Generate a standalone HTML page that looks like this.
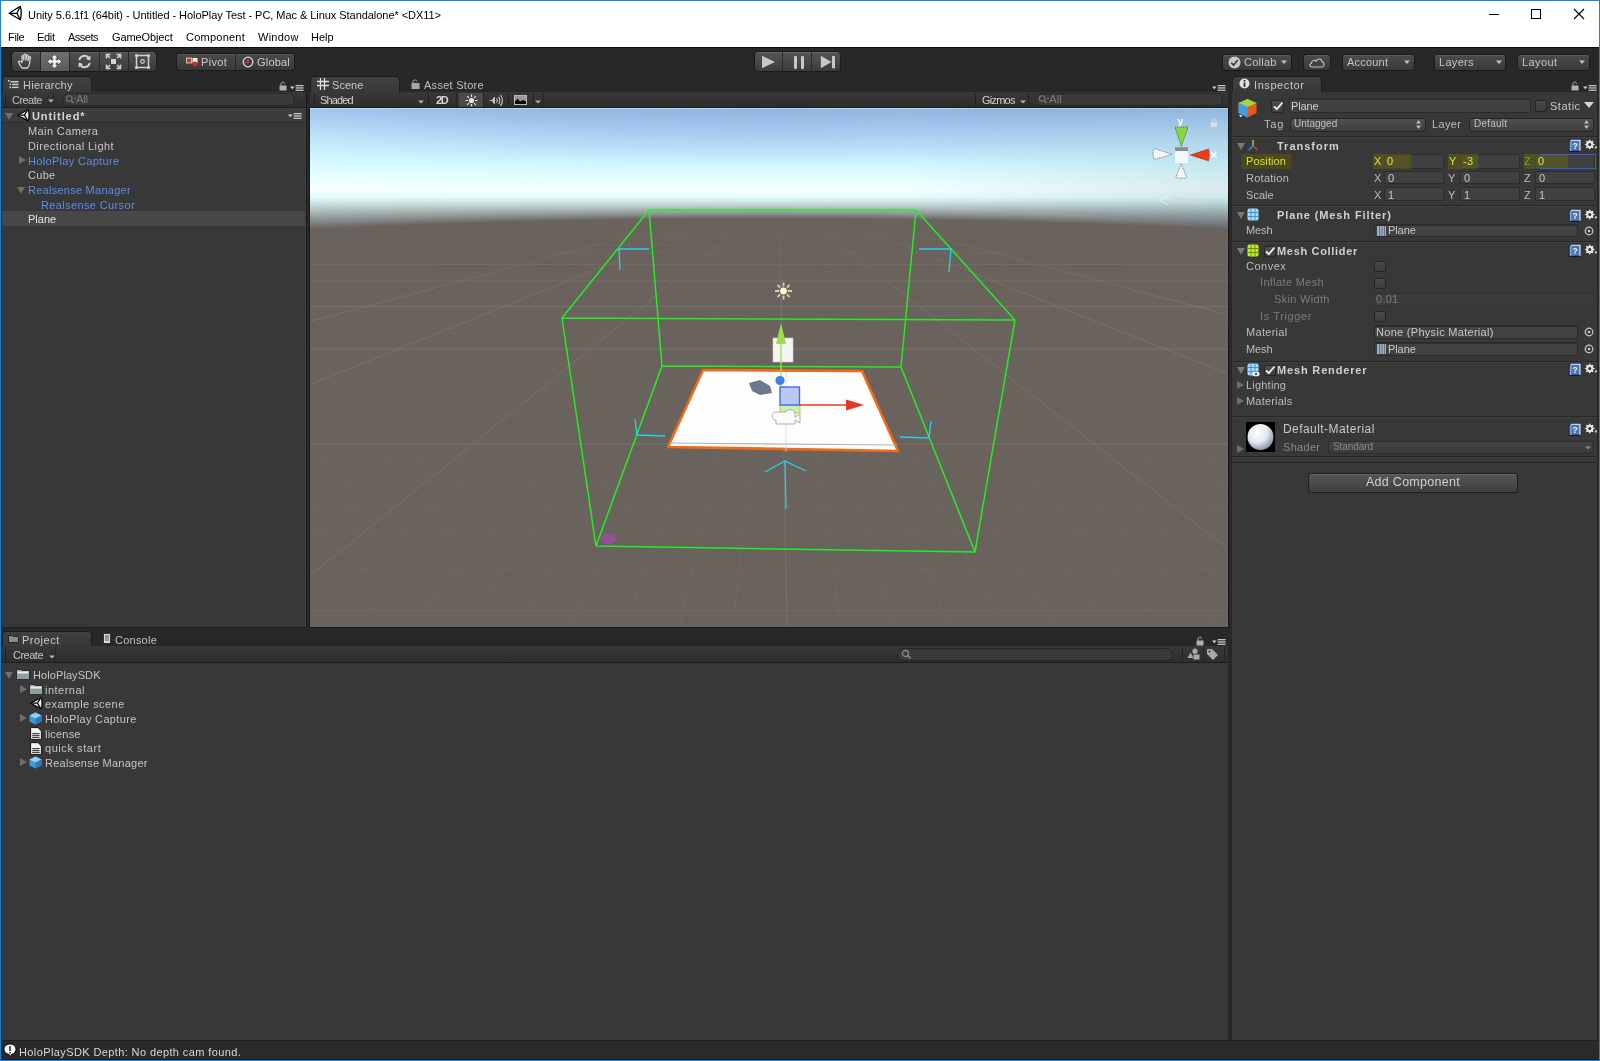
<!DOCTYPE html><html><head><meta charset="utf-8"><style>
*{margin:0;padding:0;box-sizing:border-box}
html,body{width:1600px;height:1061px;overflow:hidden;background:#282828}
body{position:relative;font-family:"Liberation Sans",sans-serif}
div,span,svg{position:absolute}
.t{will-change:transform;font-size:11px;line-height:0;white-space:nowrap;color:#c2c2c2;letter-spacing:.35px}
.tb{font-size:11px;line-height:0;white-space:nowrap;color:#c4c4c4;font-weight:bold;letter-spacing:.3px}
.w{font-size:11.5px;line-height:0;white-space:nowrap;color:#000;letter-spacing:0}
.btn{border:1px solid #1a1a1a;border-radius:3px;background:linear-gradient(#575757,#3d3d3d);box-shadow:inset 0 1px 0 rgba(255,255,255,.12)}
.tab{background:linear-gradient(#404040,#383838);border:1px solid #1f1f1f;border-bottom:none;border-radius:3px 3px 0 0}
.ptb{background:linear-gradient(#353535,#2c2c2c);border-bottom:1px solid #1c1c1c}
.fld{background:#2a2a2a;border:1px solid #222;border-radius:2px;box-shadow:inset 0 1px 0 rgba(0,0,0,.3)}
.ifld{background:#414141;border:1px solid #2b2b2b;border-radius:2px}
.cb{background:linear-gradient(#4a4a4a,#3c3c3c);border:1px solid #262626;border-radius:2px}
.sep{height:1px;background:#232323}
</style></head><body>
<div style="left:0px;top:0px;width:1600px;height:1061px;background:#1883d7"></div>
<div style="left:1px;top:1px;width:1598px;height:46px;background:#fff"></div>
<div style="left:1px;top:47px;width:1598px;height:1px;background:#0e0e0e"></div>
<div style="left:1px;top:48px;width:1598px;height:1012px;background:#282828"></div>
<div style="left:1px;top:1059px;width:1598px;height:1px;background:#1a1a1a"></div>
<svg style="left:8px;top:5px" width="16" height="16" viewBox="0 0 16 16"><path d="M1.2 8.3 L12.2 1.3 Q14.2 8.2 12.3 14.8 Z" fill="none" stroke="#000" stroke-width="1.3" stroke-linejoin="round"/><path d="M3 8.35 H9 L11.6 2.6 M9 8.35 L11.6 13.6" fill="none" stroke="#000" stroke-width="1.2"/></svg>
<span class="t" style="left:28.0px;top:14.79px;font-size:11px;color:#000;letter-spacing:-0.05px;">Unity 5.6.1f1 (64bit) - Untitled - HoloPlay Test - PC, Mac &amp; Linux Standalone* &lt;DX11&gt;</span>
<div style="left:1489px;top:14px;width:10px;height:1px;background:#000"></div>
<div style="left:1531px;top:9px;width:10px;height:10px;border:1px solid #000"></div>
<svg style="left:1573px;top:8px" width="12" height="12" viewBox="0 0 12 12"><path d="M1 1L11 11M11 1L1 11" stroke="#000" stroke-width="1.1"/></svg>
<span class="t" style="left:7.5px;top:37.49px;font-size:11px;color:#000;letter-spacing:-0.333px;">File</span>
<span class="t" style="left:37.0px;top:37.49px;font-size:11px;color:#000;letter-spacing:-0.317px;">Edit</span>
<span class="t" style="left:68.25px;top:37.49px;font-size:11px;color:#000;letter-spacing:-0.5px;">Assets</span>
<span class="t" style="left:111.75px;top:37.49px;font-size:11px;color:#000;letter-spacing:-0.111px;">GameObject</span>
<span class="t" style="left:185.5px;top:37.49px;font-size:11px;color:#000;letter-spacing:0.237px;">Component</span>
<span class="t" style="left:257.5px;top:37.49px;font-size:11px;color:#000;letter-spacing:0.26px;">Window</span>
<span class="t" style="left:310.75px;top:37.49px;font-size:11px;color:#000;letter-spacing:-0.033px;">Help</span>
<div style="left:11px;top:51px;width:146px;height:21px;border:1px solid #1b1b1b;border-radius:4px;background:linear-gradient(#515151,#3b3b3b);box-shadow:inset 0 1px 0 rgba(255,255,255,.1)"></div>
<div style="left:40px;top:52px;width:29px;height:19px;background:linear-gradient(#6e6e6e,#5c5c5c)"></div>
<div style="left:40px;top:52px;width:1px;height:19px;background:#2a2a2a"></div>
<div style="left:69px;top:52px;width:1px;height:19px;background:#2a2a2a"></div>
<div style="left:99px;top:52px;width:1px;height:19px;background:#2a2a2a"></div>
<div style="left:128px;top:52px;width:1px;height:19px;background:#2a2a2a"></div>
<svg style="left:16px;top:53px" width="20" height="17" viewBox="0 0 20 17"><path d="M6 15 C4 12 2.5 10 2.5 8.5 C3.5 7.5 4.5 8 6 9.5 L6 3.5 C6 2.3 7.6 2.3 7.6 3.5 L7.8 7 L8 2 C8 .8 9.8 .8 9.8 2 L10 7 L10.4 2.6 C10.5 1.5 12.2 1.6 12.1 2.8 L12 7.5 L12.8 4.4 C13.1 3.3 14.6 3.6 14.4 4.8 L13.6 10 C13.2 12.5 12.5 14 11.5 15 Z" fill="none" stroke="#d2d2d2" stroke-width="1.3" stroke-linejoin="round"/></svg>
<svg style="left:47px;top:54px" width="15" height="15" viewBox="0 0 15 15"><path d="M7.5 .6L11 4.2H3.9Z M7.5 14.4L11 10.8H3.9Z M.6 7.5L4.2 4V11Z M14.4 7.5L10.8 4V11Z" fill="#fff" stroke="#1a1a1a" stroke-width=".5"/><path d="M7.5 3.5V11.5M3.5 7.5H11.5" stroke="#fff" stroke-width="2.2"/></svg>
<svg style="left:76px;top:53px" width="17" height="17" viewBox="0 0 17 17"><path d="M3.2 7 A5.5 5.5 0 0 1 13 5.2" fill="none" stroke="#d2d2d2" stroke-width="2"/><path d="M14.6 2.5 L14.2 7.4 L9.8 6 Z" fill="#d2d2d2"/><path d="M13.8 10 A5.5 5.5 0 0 1 4 11.8" fill="none" stroke="#d2d2d2" stroke-width="2"/><path d="M2.4 14.5 L2.8 9.6 L7.2 11 Z" fill="#d2d2d2"/></svg>
<svg style="left:105px;top:53px" width="17" height="17" viewBox="0 0 17 17"><rect x="6" y="6" width="5" height="5" fill="#d2d2d2"/><path d="M1.5 5.5V1.5H5.5M1.5 1.5L5 5M15.5 5.5V1.5H11.5M15.5 1.5L12 5M1.5 11.5V15.5H5.5M1.5 15.5L5 12M15.5 11.5V15.5H11.5M15.5 15.5L12 12" fill="none" stroke="#d2d2d2" stroke-width="1.5"/></svg>
<svg style="left:134px;top:53px" width="17" height="17" viewBox="0 0 17 17"><rect x="2.5" y="2.5" width="12" height="12" fill="none" stroke="#d2d2d2" stroke-width="1.5"/><circle cx="2.5" cy="2.5" r="1.6" fill="#d2d2d2"/><circle cx="14.5" cy="2.5" r="1.6" fill="#d2d2d2"/><circle cx="2.5" cy="14.5" r="1.6" fill="#d2d2d2"/><circle cx="14.5" cy="14.5" r="1.6" fill="#d2d2d2"/><circle cx="8.5" cy="8.5" r="1.8" fill="none" stroke="#d2d2d2" stroke-width="1.2"/></svg>
<div style="left:176px;top:53px;width:119px;height:18px;border:1px solid #1b1b1b;border-radius:3px;background:linear-gradient(#4a4a4a,#383838);box-shadow:inset 0 1px 0 rgba(255,255,255,.08)"></div>
<div style="left:235px;top:54px;width:1px;height:16px;background:#262626"></div>
<svg style="left:186px;top:56px" width="13" height="12" viewBox="0 0 13 12"><rect x="0.5" y="2" width="5" height="5" fill="#c33" stroke="#ddd" stroke-width=".8"/><rect x="6.5" y="2" width="5" height="5" fill="#eee"/><circle cx="9" cy="8" r="2.5" fill="#d22"/></svg>
<span class="t" style="left:201.25px;top:61.79px;font-size:11px;color:#c9c9c9;letter-spacing:0.325px;">Pivot</span>
<svg style="left:242px;top:56px" width="12" height="12" viewBox="0 0 12 12"><circle cx="6" cy="6" r="4.8" fill="none" stroke="#d8d8d8" stroke-width="1.3"/><path d="M3 6.5 L6 6.5 L6 3" stroke="#d33" stroke-width="1.6" fill="none"/></svg>
<span class="t" style="left:256.75px;top:61.79px;font-size:11px;color:#c9c9c9;letter-spacing:0.19px;">Global</span>
<div style="left:754px;top:51px;width:87px;height:21px;border:1px solid #1b1b1b;border-radius:4px;background:linear-gradient(#555,#3c3c3c);box-shadow:inset 0 1px 0 rgba(255,255,255,.1)"></div>
<div style="left:782px;top:52px;width:1px;height:19px;background:#2c2c2c"></div>
<div style="left:811px;top:52px;width:1px;height:19px;background:#2c2c2c"></div>
<svg style="left:761px;top:55px" width="16" height="14" viewBox="0 0 16 14"><path d="M1 .8 L14 7 L1 13.3 Z" fill="#c8c8c8"/></svg>
<div style="left:794px;top:56px;width:3px;height:13px;background:#c8c8c8;border-radius:1px"></div>
<div style="left:801px;top:56px;width:3px;height:13px;background:#c8c8c8;border-radius:1px"></div>
<svg style="left:820px;top:55px" width="16" height="14" viewBox="0 0 16 14"><path d="M.8 .8 L11.5 7 L.8 13.3 Z" fill="#c8c8c8"/><rect x="12" y="1" width="3" height="12.3" fill="#c8c8c8"/></svg>
<div style="left:1222px;top:54px;width:70px;height:17px;border:1px solid #1b1b1b;border-radius:3px;background:linear-gradient(#4c4c4c,#393939);box-shadow:inset 0 1px 0 rgba(255,255,255,.08)"></div>
<span class="t" style="left:1243.75px;top:61.79px;font-size:11px;color:#c4c4c4;letter-spacing:0.26px;">Collab</span>
<svg style="left:1281px;top:60px" width="7" height="5" viewBox="0 0 7 5"><path d="M0 0.5H6L3 4Z" fill="#c0c0c0"/></svg>
<svg style="left:1228px;top:56px" width="13" height="13" viewBox="0 0 13 13"><circle cx="6.5" cy="6.5" r="6" fill="#c9c9c9"/><path d="M3.3 6.8 L5.6 9 L9.8 4" stroke="#3a3a3a" stroke-width="1.6" fill="none"/></svg>
<div style="left:1303px;top:54px;width:28px;height:17px;border:1px solid #1b1b1b;border-radius:3px;background:linear-gradient(#4c4c4c,#393939);box-shadow:inset 0 1px 0 rgba(255,255,255,.08)"></div>
<svg style="left:1308px;top:57px" width="18" height="11" viewBox="0 0 18 11"><path d="M4 10 C1.5 10 1 7 3.4 6.3 C3.4 3.2 7 2.5 8 4.2 C9 1 14 1.2 14 5 C16.5 5.2 16.8 10 14 10 Z" fill="none" stroke="#c4c4c4" stroke-width="1.1"/></svg>
<div style="left:1342px;top:54px;width:73px;height:17px;border:1px solid #1b1b1b;border-radius:3px;background:linear-gradient(#4c4c4c,#393939);box-shadow:inset 0 1px 0 rgba(255,255,255,.08)"></div>
<span class="t" style="left:1347.0px;top:61.79px;font-size:11px;color:#c4c4c4;letter-spacing:0.208px;">Account</span>
<svg style="left:1404px;top:60px" width="7" height="5" viewBox="0 0 7 5"><path d="M0 0.5H6L3 4Z" fill="#c0c0c0"/></svg>
<div style="left:1434px;top:54px;width:72px;height:17px;border:1px solid #1b1b1b;border-radius:3px;background:linear-gradient(#4c4c4c,#393939);box-shadow:inset 0 1px 0 rgba(255,255,255,.08)"></div>
<span class="t" style="left:1438.75px;top:61.79px;font-size:11px;color:#c4c4c4;letter-spacing:0.3px;">Layers</span>
<svg style="left:1496px;top:60px" width="7" height="5" viewBox="0 0 7 5"><path d="M0 0.5H6L3 4Z" fill="#c0c0c0"/></svg>
<div style="left:1517px;top:54px;width:73px;height:17px;border:1px solid #1b1b1b;border-radius:3px;background:linear-gradient(#4c4c4c,#393939);box-shadow:inset 0 1px 0 rgba(255,255,255,.08)"></div>
<span class="t" style="left:1521.75px;top:61.79px;font-size:11px;color:#c4c4c4;letter-spacing:0.39px;">Layout</span>
<svg style="left:1579px;top:60px" width="7" height="5" viewBox="0 0 7 5"><path d="M0 0.5H6L3 4Z" fill="#c0c0c0"/></svg>
<div style="left:2px;top:76px;width:90px;height:16px;background:linear-gradient(#404040,#393939);border:1px solid #1e1e1e;border-bottom:none;border-radius:4px 4px 0 0"></div>
<svg style="left:8px;top:80px" width="11" height="9" viewBox="0 0 11 9"><rect x="0" y="0" width="1.6" height="1.6" fill="#ccc"/><rect x="2.5" y="1" width="8" height="1.5" fill="#ccc"/><rect x="1.5" y="3.5" width="1.6" height="1.6" fill="#ccc"/><rect x="4" y="3.7" width="6.5" height="1.5" fill="#ccc"/><rect x="1.5" y="6.5" width="1.6" height="1.6" fill="#ccc"/><rect x="4" y="6.6" width="6.5" height="1.5" fill="#ccc"/></svg>
<span class="t" style="left:22.5px;top:85.39px;font-size:11px;color:#c8c8c8;letter-spacing:0.306px;">Hierarchy</span>
<svg style="left:279px;top:81px" width="8" height="10" viewBox="0 0 8 10"><path d="M2 4.5 V2.8 C2 .6 5.6 .6 5.6 2.8" fill="none" stroke="#b8b8b8" stroke-width="1"/><rect x=".5" y="4.5" width="7" height="5" fill="#b0b0b0"/></svg>
<svg style="left:290px;top:84px" width="14" height="8" viewBox="0 0 14 8"><path d="M0 2.6H4.6L2.3 5.2Z" fill="#cfcfcf"/><rect x="5.6" y="1" width="8" height="1.3" fill="#c4c4c4"/><rect x="5.6" y="3.3" width="8" height="1.3" fill="#c4c4c4"/><rect x="5.6" y="5.6" width="8" height="1.3" fill="#c4c4c4"/></svg>
<div style="left:2px;top:92px;width:304px;height:16px;background:linear-gradient(#383838,#2e2e2e);border-bottom:1px solid #1d1d1d"></div>
<div style="left:5px;top:93px;width:1px;height:14px;background:#232323"></div>
<div style="left:53px;top:93px;width:1px;height:14px;background:#262626"></div>
<span class="t" style="left:11.5px;top:99.59px;font-size:11px;color:#c4c4c4;letter-spacing:-0.55px;">Create</span>
<svg style="left:48px;top:99px" width="6" height="4" viewBox="0 0 6 4"><path d="M0 0.5H6L3 3.5Z" fill="#b0b0b0"/></svg>
<div style="left:62px;top:93px;width:233px;height:13px;border-radius:7px;background:#3a3a3a;border:1px solid #262626"></div>
<svg style="left:65px;top:94px" width="13" height="11" viewBox="0 0 13 11"><circle cx="4.2" cy="4.5" r="2.8" fill="none" stroke="#777" stroke-width="1.1"/><path d="M6.3 6.7L8.6 9" stroke="#777" stroke-width="1.3"/><path d="M8.5 3.8H11.5L10 5.4Z" fill="#777"/></svg>
<span class="t" style="left:76.0px;top:99.32px;font-size:11.5px;color:#7c7c7c;letter-spacing:-0.4px;">All</span>
<div style="left:2px;top:108px;width:304px;height:519px;background:#383838"></div>
<div style="left:2px;top:108px;width:304px;height:15px;background:linear-gradient(#3e3e3e,#3a3a3a);border-bottom:1px solid #2b2b2b"></div>
<svg style="left:5px;top:112px" width="8" height="8" viewBox="0 0 8 8"><path d="M0 1H8L4 8Z" fill="#6f6f6f"/></svg>
<svg style="left:16.5px;top:109px" width="13" height="13" viewBox="0 0 13 13"><path d="M0.7,6.2 L11.2,0.5 Q12.9,6.2 11.2,11.9 Z" fill="#f4f4f4" stroke="#050505" stroke-width="1.2" stroke-linejoin="round"/><path d="M2.4,6.2 H7.5 L10.3,1.4 M7.5,6.2 L10.3,11" fill="none" stroke="#050505" stroke-width="1.3"/></svg>
<span class="t" style="left:32.4px;top:116.49px;font-size:11px;color:#d4d4d4;font-weight:bold;letter-spacing:0.919px;">Untitled*</span>
<svg style="left:288px;top:112px" width="14" height="8" viewBox="0 0 14 8"><path d="M0 2.6H4.6L2.3 5.2Z" fill="#cfcfcf"/><rect x="5.6" y="1" width="8" height="1.3" fill="#c4c4c4"/><rect x="5.6" y="3.3" width="8" height="1.3" fill="#c4c4c4"/><rect x="5.6" y="5.6" width="8" height="1.3" fill="#c4c4c4"/></svg>
<div style="left:2px;top:211px;width:304px;height:15px;background:#474747"></div>
<span class="t" style="left:28.4px;top:131.19px;font-size:11px;color:#c6c6c6;letter-spacing:0.395px;">Main Camera</span>
<span class="t" style="left:28.4px;top:145.89px;font-size:11px;color:#c6c6c6;letter-spacing:0.419px;">Directional Light</span>
<span class="t" style="left:28.4px;top:160.59px;font-size:11px;color:#5a8ee8;letter-spacing:0.32px;">HoloPlay Capture</span>
<span class="t" style="left:28.4px;top:175.29px;font-size:11px;color:#c6c6c6;letter-spacing:0.3px;">Cube</span>
<span class="t" style="left:28.4px;top:189.99px;font-size:11px;color:#5a8ee8;letter-spacing:0.259px;">Realsense Manager</span>
<span class="t" style="left:41.4px;top:204.69px;font-size:11px;color:#5a8ee8;letter-spacing:0.37px;">Realsense Cursor</span>
<span class="t" style="left:28.4px;top:219.39px;font-size:11px;color:#e6e6e6;letter-spacing:0.013px;">Plane</span>
<svg style="left:17.5px;top:156px" width="8" height="8" viewBox="0 0 8 8"><path d="M1 0V8L8 4Z" fill="#6e6e6e"/></svg>
<svg style="left:17px;top:186px" width="8" height="8" viewBox="0 0 8 8"><path d="M0 1H8L4 8Z" fill="#6e6e6e"/></svg>
<div style="left:310px;top:76px;width:90px;height:16px;background:linear-gradient(#404040,#393939);border:1px solid #1e1e1e;border-bottom:none;border-radius:4px 4px 0 0"></div>
<svg style="left:317px;top:78px" width="12" height="12" viewBox="0 0 12 12"><path d="M3.5 0V12M7.5 0V12M0 3.5H12M0 7.5H12" stroke="#ddd" stroke-width="1.3"/></svg>
<span class="t" style="left:331.6px;top:85.39px;font-size:11px;color:#c8c8c8;letter-spacing:0.05px;">Scene</span>
<svg style="left:411px;top:79px" width="9" height="10" viewBox="0 0 9 10"><path d="M2 4V2.5C2 .5 6 .5 6 2.5" fill="none" stroke="#aaa" stroke-width="1"/><rect x=".5" y="4" width="8" height="6" fill="#a8a8a8"/></svg>
<span class="t" style="left:424.0px;top:85.39px;font-size:11px;color:#c0c0c0;letter-spacing:0.275px;">Asset Store</span>
<svg style="left:1212px;top:84px" width="14" height="8" viewBox="0 0 14 8"><path d="M0 2.6H4.6L2.3 5.2Z" fill="#cfcfcf"/><rect x="5.6" y="1" width="8" height="1.3" fill="#c4c4c4"/><rect x="5.6" y="3.3" width="8" height="1.3" fill="#c4c4c4"/><rect x="5.6" y="5.6" width="8" height="1.3" fill="#c4c4c4"/></svg>
<div style="left:310px;top:92px;width:918px;height:16px;background:linear-gradient(#383838,#2d2d2d);border-bottom:1px solid #1a1a1a"></div>
<div style="left:314px;top:93px;width:1px;height:14px;background:#232323"></div>
<div style="left:428px;top:93px;width:1px;height:14px;background:#232323"></div>
<div style="left:456px;top:93px;width:1px;height:14px;background:#232323"></div>
<div style="left:483px;top:93px;width:1px;height:14px;background:#232323"></div>
<div style="left:508px;top:93px;width:1px;height:14px;background:#232323"></div>
<div style="left:533px;top:93px;width:1px;height:14px;background:#232323"></div>
<div style="left:543px;top:93px;width:1px;height:14px;background:#232323"></div>
<div style="left:975px;top:93px;width:1px;height:14px;background:#232323"></div>
<div style="left:1028px;top:93px;width:1px;height:14px;background:#232323"></div>
<span class="t" style="left:320.4px;top:99.59px;font-size:11px;color:#d0d0d0;letter-spacing:-0.87px;">Shaded</span>
<svg style="left:418px;top:100px" width="6" height="4" viewBox="0 0 6 4"><path d="M0 0.5H6L3 3.5Z" fill="#b0b0b0"/></svg>
<span class="t" style="left:435.6px;top:99.59px;font-size:11px;color:#d8d8d8;font-weight:bold;letter-spacing:-1.25px;">2D</span>
<div style="left:459px;top:93px;width:24px;height:14px;background:#4a4a4a"></div>
<svg style="left:465px;top:94px" width="13" height="13" viewBox="0 0 13 13"><circle cx="6.5" cy="6.5" r="2.6" fill="#e6e6e6"/><path d="M6.5 0.5V3M6.5 10V12.5M0.5 6.5H3M10 6.5H12.5M2.2 2.2L3.9 3.9M9.1 9.1L10.8 10.8M10.8 2.2L9.1 3.9M2.2 10.8L3.9 9.1" stroke="#e6e6e6" stroke-width="1.2"/></svg>
<svg style="left:489px;top:94px" width="14" height="13" viewBox="0 0 14 13"><path d="M0.5 6.5H3L5.5 3V10L3 6.5" fill="#ccc" stroke="#ccc" stroke-width=".8"/><path d="M7.5 4.5C8.5 5.5 8.5 7.5 7.5 8.5M9.5 2.8C11.2 4.6 11.2 8.4 9.5 10.2M11.5 1.2C14 3.8 14 9.2 11.5 11.8" fill="none" stroke="#ccc" stroke-width="1.1"/></svg>
<svg style="left:514px;top:95px" width="13" height="10" viewBox="0 0 13 10"><rect x=".5" y=".5" width="12" height="9" fill="#9a9a9a" stroke="#b8b8b8" stroke-width="1"/><path d="M1 9V6.5L3.5 3.5L6 6.5L9 5L12 6.5V9Z" fill="#080808"/></svg>
<svg style="left:535px;top:100px" width="6" height="4" viewBox="0 0 6 4"><path d="M0 0.5H6L3 3.5Z" fill="#b0b0b0"/></svg>
<span class="t" style="left:981.6px;top:99.59px;font-size:11px;color:#d0d0d0;letter-spacing:-0.78px;">Gizmos</span>
<svg style="left:1020px;top:100px" width="6" height="4" viewBox="0 0 6 4"><path d="M0 0.5H6L3 3.5Z" fill="#b0b0b0"/></svg>
<div style="left:1035px;top:93px;width:188px;height:13px;border-radius:7px;background:#3a3a3a;border:1px solid #262626"></div>
<svg style="left:1038px;top:94px" width="13" height="11" viewBox="0 0 13 11"><circle cx="4.2" cy="4.5" r="2.8" fill="none" stroke="#777" stroke-width="1.1"/><path d="M6.3 6.7L8.6 9" stroke="#777" stroke-width="1.3"/><path d="M8.5 3.8H11.5L10 5.4Z" fill="#777"/></svg>
<span class="t" style="left:1048.75px;top:99.32px;font-size:11.5px;color:#7c7c7c;letter-spacing:-0.025px;">All</span>
<svg style="left:310px;top:108px" width="918" height="519" viewBox="310 108 918 519">
<defs>
<linearGradient id="gfade" x1="0" y1="215" x2="0" y2="300" gradientUnits="userSpaceOnUse"><stop offset="0" stop-color="#fff" stop-opacity="0"/><stop offset="1" stop-color="#fff" stop-opacity="1"/></linearGradient>
<mask id="gm"><rect x="300" y="100" width="940" height="540" fill="url(#gfade)"/></mask>
<linearGradient id="gfade2" x1="0" y1="230" x2="0" y2="627" gradientUnits="userSpaceOnUse"><stop offset="0" stop-color="#fff" stop-opacity="0"/><stop offset="1" stop-color="#fff" stop-opacity="1"/></linearGradient>
<mask id="gm2"><rect x="300" y="100" width="940" height="540" fill="url(#gfade2)"/></mask>
</defs>
<g><path d="M300,68.00Q769,108.00 1238,68.00V640H300Z" fill="#8aacd8"/><path d="M300,69.00Q769,109.00 1238,69.00V640H300Z" fill="#8aacd8"/><path d="M300,70.00Q769,110.00 1238,70.00V640H300Z" fill="#8badd8"/><path d="M300,71.00Q769,111.00 1238,71.00V640H300Z" fill="#8badd9"/><path d="M300,72.00Q769,112.00 1238,72.00V640H300Z" fill="#8badd9"/><path d="M300,73.00Q769,113.00 1238,73.00V640H300Z" fill="#8caed9"/><path d="M300,74.00Q769,114.00 1238,74.00V640H300Z" fill="#8caed9"/><path d="M300,75.00Q769,115.00 1238,75.00V640H300Z" fill="#8caed9"/><path d="M300,76.00Q769,116.00 1238,76.00V640H300Z" fill="#8daeda"/><path d="M300,77.00Q769,117.00 1238,77.00V640H300Z" fill="#8dafda"/><path d="M300,78.00Q769,118.00 1238,78.00V640H300Z" fill="#8eafda"/><path d="M300,79.00Q769,119.00 1238,79.00V640H300Z" fill="#8eafda"/><path d="M300,80.00Q769,120.00 1238,80.00V640H300Z" fill="#8eb0da"/><path d="M300,81.00Q769,121.00 1238,81.00V640H300Z" fill="#8fb0db"/><path d="M300,82.00Q769,122.00 1238,82.00V640H300Z" fill="#8fb0db"/><path d="M300,83.00Q769,123.00 1238,83.00V640H300Z" fill="#8fb0db"/><path d="M300,84.00Q769,124.00 1238,84.00V640H300Z" fill="#90b1db"/><path d="M300,85.00Q769,125.00 1238,85.00V640H300Z" fill="#90b1db"/><path d="M300,86.00Q769,126.00 1238,86.00V640H300Z" fill="#90b1dc"/><path d="M300,87.00Q769,127.00 1238,87.00V640H300Z" fill="#91b2dc"/><path d="M300,88.00Q769,128.00 1238,88.00V640H300Z" fill="#91b2dc"/><path d="M300,89.00Q769,129.00 1238,89.00V640H300Z" fill="#92b3dd"/><path d="M300,90.00Q769,130.00 1238,90.00V640H300Z" fill="#93b4de"/><path d="M300,91.00Q769,131.00 1238,91.00V640H300Z" fill="#94b5df"/><path d="M300,92.00Q769,132.00 1238,92.00V640H300Z" fill="#94b6e0"/><path d="M300,93.00Q769,133.00 1238,93.00V640H300Z" fill="#95b7e0"/><path d="M300,94.00Q769,134.00 1238,94.00V640H300Z" fill="#96b8e1"/><path d="M300,95.00Q769,135.00 1238,95.00V640H300Z" fill="#97b9e2"/><path d="M300,96.00Q769,136.00 1238,96.00V640H300Z" fill="#98bae3"/><path d="M300,97.00Q769,137.00 1238,97.00V640H300Z" fill="#99bbe4"/><path d="M300,98.00Q769,138.00 1238,98.00V640H300Z" fill="#9abce5"/><path d="M300,99.00Q769,139.00 1238,99.00V640H300Z" fill="#9abde6"/><path d="M300,100.00Q769,140.00 1238,100.00V640H300Z" fill="#9bbee7"/><path d="M300,101.00Q769,141.00 1238,101.00V640H300Z" fill="#9cbfe8"/><path d="M300,102.00Q769,142.00 1238,102.00V640H300Z" fill="#9dc0e9"/><path d="M300,103.00Q769,143.00 1238,103.00V640H300Z" fill="#9ec1ea"/><path d="M300,104.00Q769,144.00 1238,104.00V640H300Z" fill="#9fc2ea"/><path d="M300,105.00Q769,145.00 1238,105.00V640H300Z" fill="#9fc3eb"/><path d="M300,106.00Q769,146.00 1238,106.00V640H300Z" fill="#a0c4ec"/><path d="M300,107.00Q769,147.00 1238,107.00V640H300Z" fill="#a1c5ed"/><path d="M300,108.00Q769,148.00 1238,108.00V640H300Z" fill="#a2c6ee"/><path d="M300,109.14Q769,148.86 1238,109.14V640H300Z" fill="#a3c7ee"/><path d="M300,110.27Q769,149.73 1238,110.27V640H300Z" fill="#a4c8ef"/><path d="M300,111.41Q769,150.59 1238,111.41V640H300Z" fill="#a6caef"/><path d="M300,112.55Q769,151.45 1238,112.55V640H300Z" fill="#a7cbf0"/><path d="M300,113.68Q769,152.32 1238,113.68V640H300Z" fill="#a8ccf0"/><path d="M300,114.82Q769,153.18 1238,114.82V640H300Z" fill="#a9cdf1"/><path d="M300,115.95Q769,154.05 1238,115.95V640H300Z" fill="#aacef1"/><path d="M300,117.09Q769,154.91 1238,117.09V640H300Z" fill="#abcff2"/><path d="M300,118.23Q769,155.77 1238,118.23V640H300Z" fill="#add1f2"/><path d="M300,119.36Q769,156.64 1238,119.36V640H300Z" fill="#aed2f3"/><path d="M300,120.50Q769,157.50 1238,120.50V640H300Z" fill="#afd3f3"/><path d="M300,121.64Q769,158.36 1238,121.64V640H300Z" fill="#b0d4f3"/><path d="M300,122.77Q769,159.23 1238,122.77V640H300Z" fill="#b1d5f4"/><path d="M300,123.91Q769,160.09 1238,123.91V640H300Z" fill="#b3d7f4"/><path d="M300,125.05Q769,160.95 1238,125.05V640H300Z" fill="#b4d8f5"/><path d="M300,126.18Q769,161.82 1238,126.18V640H300Z" fill="#b5d9f5"/><path d="M300,127.32Q769,162.68 1238,127.32V640H300Z" fill="#b6daf6"/><path d="M300,128.45Q769,163.55 1238,128.45V640H300Z" fill="#b7dbf6"/><path d="M300,129.59Q769,164.41 1238,129.59V640H300Z" fill="#b8dcf7"/><path d="M300,130.73Q769,165.27 1238,130.73V640H300Z" fill="#badef7"/><path d="M300,131.86Q769,166.14 1238,131.86V640H300Z" fill="#bbdff8"/><path d="M300,133.00Q769,167.00 1238,133.00V640H300Z" fill="#bce0f8"/><path d="M300,134.56Q769,167.44 1238,134.56V640H300Z" fill="#bde2f8"/><path d="M300,136.12Q769,167.88 1238,136.12V640H300Z" fill="#bfe3f9"/><path d="M300,137.69Q769,168.31 1238,137.69V640H300Z" fill="#c0e4f9"/><path d="M300,139.25Q769,168.75 1238,139.25V640H300Z" fill="#c2e6fa"/><path d="M300,140.81Q769,169.19 1238,140.81V640H300Z" fill="#c3e8fa"/><path d="M300,142.38Q769,169.62 1238,142.38V640H300Z" fill="#c4e9fb"/><path d="M300,143.94Q769,170.06 1238,143.94V640H300Z" fill="#c6eafb"/><path d="M300,145.50Q769,170.50 1238,145.50V640H300Z" fill="#c7ecfc"/><path d="M300,147.06Q769,170.94 1238,147.06V640H300Z" fill="#c8eefc"/><path d="M300,148.62Q769,171.38 1238,148.62V640H300Z" fill="#caeffc"/><path d="M300,150.19Q769,171.81 1238,150.19V640H300Z" fill="#cbf0fd"/><path d="M300,151.75Q769,172.25 1238,151.75V640H300Z" fill="#ccf2fd"/><path d="M300,153.31Q769,172.69 1238,153.31V640H300Z" fill="#cef4fe"/><path d="M300,154.88Q769,173.12 1238,154.88V640H300Z" fill="#cff5fe"/><path d="M300,156.44Q769,173.56 1238,156.44V640H300Z" fill="#d1f6ff"/><path d="M300,158.00Q769,174.00 1238,158.00V640H300Z" fill="#d2f8ff"/><path d="M300,159.17Q769,174.83 1238,159.17V640H300Z" fill="#d3f8ff"/><path d="M300,160.33Q769,175.67 1238,160.33V640H300Z" fill="#d5f9ff"/><path d="M300,161.50Q769,176.50 1238,161.50V640H300Z" fill="#d6faff"/><path d="M300,162.67Q769,177.33 1238,162.67V640H300Z" fill="#d7faff"/><path d="M300,163.83Q769,178.17 1238,163.83V640H300Z" fill="#d9faff"/><path d="M300,165.00Q769,179.00 1238,165.00V640H300Z" fill="#dafbff"/><path d="M300,166.17Q769,179.83 1238,166.17V640H300Z" fill="#dbfcff"/><path d="M300,167.33Q769,180.67 1238,167.33V640H300Z" fill="#ddfcff"/><path d="M300,168.50Q769,181.50 1238,168.50V640H300Z" fill="#defcff"/><path d="M300,169.67Q769,182.33 1238,169.67V640H300Z" fill="#dffdff"/><path d="M300,170.83Q769,183.17 1238,170.83V640H300Z" fill="#e1feff"/><path d="M300,172.00Q769,184.00 1238,172.00V640H300Z" fill="#e2feff"/><path d="M300,173.42Q769,184.58 1238,173.42V640H300Z" fill="#e4feff"/><path d="M300,174.83Q769,185.17 1238,174.83V640H300Z" fill="#e5feff"/><path d="M300,176.25Q769,185.75 1238,176.25V640H300Z" fill="#e7feff"/><path d="M300,177.67Q769,186.33 1238,177.67V640H300Z" fill="#e9feff"/><path d="M300,179.08Q769,186.92 1238,179.08V640H300Z" fill="#eafeff"/><path d="M300,180.50Q769,187.50 1238,180.50V640H300Z" fill="#ecfeff"/><path d="M300,181.92Q769,188.08 1238,181.92V640H300Z" fill="#eeffff"/><path d="M300,183.33Q769,188.67 1238,183.33V640H300Z" fill="#efffff"/><path d="M300,184.75Q769,189.25 1238,184.75V640H300Z" fill="#f1ffff"/><path d="M300,186.17Q769,189.83 1238,186.17V640H300Z" fill="#f3ffff"/><path d="M300,187.58Q769,190.42 1238,187.58V640H300Z" fill="#f4ffff"/><path d="M300,189.00Q769,191.00 1238,189.00V640H300Z" fill="#f6ffff"/><path d="M300,190.14Q769,191.86 1238,190.14V640H300Z" fill="#f3ffff"/><path d="M300,191.29Q769,192.71 1238,191.29V640H300Z" fill="#f0fefe"/><path d="M300,192.43Q769,193.57 1238,192.43V640H300Z" fill="#edfefe"/><path d="M300,193.57Q769,194.43 1238,193.57V640H300Z" fill="#ebfdfd"/><path d="M300,194.71Q769,195.29 1238,194.71V640H300Z" fill="#e8fdfd"/><path d="M300,195.86Q769,196.14 1238,195.86V640H300Z" fill="#e5fcfc"/><path d="M300,197.00Q769,197.00 1238,197.00V640H300Z" fill="#e2fcfc"/><path d="M300,198.17Q769,197.83 1238,198.17V640H300Z" fill="#def7f7"/><path d="M300,199.33Q769,198.67 1238,199.33V640H300Z" fill="#d9f1f1"/><path d="M300,200.50Q769,199.50 1238,200.50V640H300Z" fill="#d5ecec"/><path d="M300,201.67Q769,200.33 1238,201.67V640H300Z" fill="#d1e7e7"/><path d="M300,202.83Q769,201.17 1238,202.83V640H300Z" fill="#cce1e1"/><path d="M300,204.00Q769,202.00 1238,204.00V640H300Z" fill="#c8dcdc"/><path d="M300,205.40Q769,202.60 1238,205.40V640H300Z" fill="#c3d5d5"/><path d="M300,206.80Q769,203.20 1238,206.80V640H300Z" fill="#becece"/><path d="M300,208.20Q769,203.80 1238,208.20V640H300Z" fill="#b8c8c8"/><path d="M300,209.60Q769,204.40 1238,209.60V640H300Z" fill="#b3c1c1"/><path d="M300,211.00Q769,205.00 1238,211.00V640H300Z" fill="#aebaba"/><path d="M300,212.50Q769,205.50 1238,212.50V640H300Z" fill="#a8b2b2"/><path d="M300,214.00Q769,206.00 1238,214.00V640H300Z" fill="#a1abab"/><path d="M300,215.50Q769,206.50 1238,215.50V640H300Z" fill="#9aa4a4"/><path d="M300,217.00Q769,207.00 1238,217.00V640H300Z" fill="#949c9c"/><path d="M300,219.00Q769,207.00 1238,219.00V640H300Z" fill="#8d9393"/><path d="M300,221.00Q769,207.00 1238,221.00V640H300Z" fill="#858989"/><path d="M300,223.00Q769,207.00 1238,223.00V640H300Z" fill="#7e8080"/><path d="M300,225.00Q769,207.00 1238,225.00V640H300Z" fill="#777674"/><path d="M300,227.00Q769,207.00 1238,227.00V640H300Z" fill="#716c69"/><path d="M300,229Q769,207 1238,229V640H300Z" fill="#6a625d"/></g>
<rect x="310" y="108" width="918" height="1" fill="#bde8fb" opacity=".8"/>
<defs><linearGradient id="rside" x1="900" y1="0" x2="1228" y2="0" gradientUnits="userSpaceOnUse"><stop offset="0" stop-color="#306080" stop-opacity="0"/><stop offset="1" stop-color="#306080" stop-opacity=".13"/></linearGradient></defs>
<path d="M900,108 H1228 V228 Q1100,214 900,204 Z" fill="url(#rside)"/>
<g mask="url(#gm)">
<path d="M611.2,230.5L-1319,627 M615.5,230.5L-1265,627 M619.8,230.5L-1211,627 M624.1,230.5L-1157,627 M628.4,230.5L-1103,627 M632.8,230.5L-1049,627 M637.1,230.5L-995,627 M641.4,230.5L-941,627 M645.7,230.5L-887,627 M654.4,230.5L-779,627 M658.7,230.5L-725,627 M663.0,230.5L-671,627 M667.3,230.5L-617,627 M671.6,230.5L-563,627 M676.0,230.5L-509,627 M680.3,230.5L-455,627 M684.6,230.5L-401,627 M688.9,230.5L-347,627 M697.6,230.5L-239,627 M701.9,230.5L-185,627 M706.2,230.5L-131,627 M710.5,230.5L-77,627 M714.8,230.5L-23,627 M719.2,230.5L31,627 M723.5,230.5L85,627 M727.8,230.5L139,627 M732.1,230.5L193,627 M740.8,230.5L301,627 M745.1,230.5L355,627 M749.4,230.5L409,627 M753.7,230.5L463,627 M758.0,230.5L517,627 M762.4,230.5L571,627 M766.7,230.5L625,627 M771.0,230.5L679,627 M775.3,230.5L733,627 M784.0,230.5L841,627 M788.3,230.5L895,627 M792.6,230.5L949,627 M796.9,230.5L1003,627 M801.2,230.5L1057,627 M805.6,230.5L1111,627 M809.9,230.5L1165,627 M814.2,230.5L1219,627 M818.5,230.5L1273,627 M827.2,230.5L1381,627 M831.5,230.5L1435,627 M835.8,230.5L1489,627 M840.1,230.5L1543,627 M844.4,230.5L1597,627 M848.8,230.5L1651,627 M853.1,230.5L1705,627 M857.4,230.5L1759,627 M861.7,230.5L1813,627 M870.4,230.5L1921,627 M874.7,230.5L1975,627 M879.0,230.5L2029,627 M883.3,230.5L2083,627 M887.6,230.5L2137,627 M892.0,230.5L2191,627 M896.3,230.5L2245,627 M900.6,230.5L2299,627 M904.9,230.5L2353,627 M913.6,230.5L2461,627 M917.9,230.5L2515,627 M922.2,230.5L2569,627 M926.5,230.5L2623,627 M930.8,230.5L2677,627 M935.2,230.5L2731,627 M939.5,230.5L2785,627 M943.8,230.5L2839,627 M948.1,230.5L2893,627 M300,610.5L1240,610.5 M300,568.8L1240,568.8 M300,534.7L1240,534.7 M300,506.3L1240,506.3 M300,482.3L1240,482.3 M300,461.8L1240,461.8 M300,428.4L1240,428.4 M300,414.7L1240,414.7 M300,402.5L1240,402.5 M300,391.6L1240,391.6 M300,381.8L1240,381.8 M300,372.9L1240,372.9 M300,364.9L1240,364.9 M300,357.5L1240,357.5 M300,350.7L1240,350.7 M300,338.8L1240,338.8 M300,333.5L1240,333.5 M300,328.6L1240,328.6 M300,324.0L1240,324.0 M300,319.7L1240,319.7 M300,315.7L1240,315.7 M300,312.0L1240,312.0 M300,308.5L1240,308.5 M300,305.1L1240,305.1 M300,299.1L1240,299.1 M300,296.3L1240,296.3 M300,293.6L1240,293.6 M300,291.1L1240,291.1 M300,288.7L1240,288.7 M300,286.5L1240,286.5 M300,284.3L1240,284.3 M300,282.3L1240,282.3 M300,280.3L1240,280.3 M300,276.6L1240,276.6 M300,274.9L1240,274.9 M300,273.3L1240,273.3 M300,271.7L1240,271.7 M300,270.2L1240,270.2 M300,268.7L1240,268.7 M300,267.3L1240,267.3 M300,266.0L1240,266.0 M300,264.7L1240,264.7 M300,262.2L1240,262.2 M300,261.1L1240,261.1 M300,259.9L1240,259.9 M300,258.8L1240,258.8 M300,257.8L1240,257.8 M300,256.8L1240,256.8 M300,255.8L1240,255.8 M300,254.9L1240,254.9 M300,253.9L1240,253.9 M300,252.2L1240,252.2 M300,251.3L1240,251.3 M300,250.5L1240,250.5 M300,249.7L1240,249.7 M300,249.0L1240,249.0 M300,248.2L1240,248.2 M300,247.5L1240,247.5 M300,246.8L1240,246.8 M300,246.1L1240,246.1 M300,244.8L1240,244.8 M300,244.1L1240,244.1 M300,243.5L1240,243.5 M300,242.9L1240,242.9 M300,242.3L1240,242.3 M300,241.8L1240,241.8 M300,241.2L1240,241.2 M300,240.7L1240,240.7 M300,240.1L1240,240.1" stroke="#7e7874" stroke-width="1" fill="none" opacity=".35" mask="url(#gm2)"/>
<path d="M698.4,217.6L-833,627 M725.4,217.6L-293,627 M752.4,217.6L247,627 M779.4,217.6L787,627 M806.4,217.6L1327,627 M833.4,217.6L1867,627 M860.4,217.6L2407,627 M300,233.6L1240,233.6 M300,239L1240,239 M300,245L1240,245 M300,253L1240,253 M300,264.5L1240,264.5 M300,281L1240,281 M300,306.5L1240,306.5 M300,349L1240,349 M300,444L1240,444" stroke="#8a8480" stroke-width="1" fill="none" opacity=".45"/>
</g>

<path d="M649,210L916,210 M649,210L562,318 M916,210L1015,320 M562,318L1015,320 M649,210L662,366 M916,210L901,367 M562,318L596,546 M1015,320L975,552 M662,366L901,367 M662,366L596,546 M901,367L975,552 M596,546L975,552" stroke="#22ee22" stroke-width="1.5" fill="none"/>
<path d="M703,370 L862,371 L898,451 L668,447 Z" fill="#fdfdfd" stroke="#f26a16" stroke-width="2.6" stroke-linejoin="round"/>
<path d="M670,443 L897,445" stroke="#aeb4c0" stroke-width="1.2"/>
<path d="M786,372 L786,452" stroke="#cfd4dc" stroke-width="0.8"/>
<path d="M749,383 L760,380 L770,386 L772,393 L760,395 L752,391 Z" fill="#6a7890"/>
<path d="M617,249 H649 M619,249 L620,270" stroke="#22d2f0" stroke-width="1.3" fill="none"/>
<path d="M919,249 H952 M951,249 L949,272" stroke="#22d2f0" stroke-width="1.3" fill="none"/>
<path d="M635,419 L637,435 L665,436" stroke="#22d2f0" stroke-width="1.3" fill="none"/>
<path d="M931,421 L929,438 L900,437" stroke="#22d2f0" stroke-width="1.3" fill="none"/>
<path d="M786,509 L785,461 M765,472 L785,461 L806,471" stroke="#22d2f0" stroke-width="1.3" fill="none"/>
<rect x="773" y="338" width="20" height="24" fill="#f4f4f4" stroke="#d0d0d0" stroke-width=".6"/>
<path d="M781,405 V340" stroke="#9be04a" stroke-width="1.3"/>
<path d="M776,344 L781,323 L786,344 Z" fill="#9be04a"/>
<rect x="780" y="405" width="20" height="8" fill="#cfeeaa" stroke="#9ad85a" stroke-width="1"/>
<rect x="780" y="387" width="19.5" height="18" fill="#bcc6f2" stroke="#3d6ee8" stroke-width="1.4"/>
<circle cx="780" cy="380.5" r="4.6" fill="#3b82e6"/>
<path d="M800,405 H848" stroke="#e23a26" stroke-width="1.3"/>
<path d="M846,399.5 L864,405 L846,410.5 Z" fill="#e23a26"/>
<path d="M776,412 C771,412 771,420 776,420 L776,424 H795 V420 L800,423 V414 L795,417 V414 C795,409 788,408 786,412 Z" fill="#fafafa" stroke="#a8a8a8" stroke-width=".9"/>
<g transform="translate(783.5 291)"><path d="M0,-8.5V-4.5M0,4.5V8.5M-8.5,0H-4.5M4.5,0H8.5M-6,-6L-3.4,-3.4M3.4,3.4L6,6M6,-6L3.4,-3.4M-3.4,3.4L-6,6" stroke="#d8cfa8" stroke-width="1.8"/><circle r="4" fill="#fff3d6" stroke="#6e6650" stroke-width=".9"/></g>
<g transform="translate(608 538)"><path d="M-7,0 L0,-4 L7,0 L0,4 Z M-4,0 L0,-2 L4,0 L0,2 Z M-7,0 V2 L0,6 L7,2 V0" fill="none" stroke="#c23ccd" stroke-width="1"/></g>

<g>
<text x="1177.6" y="124.6" font-family="Liberation Sans" font-weight="bold" font-size="10" fill="#fff">y</text>
<path d="M1175,127 L1188,127 L1181.3,146.5 Z" fill="#86d83c" stroke="#3a4a2a" stroke-width=".7" stroke-dasharray="1.2 .8"/>
<rect x="1175" y="147.2" width="13" height="4" fill="#8a8c90"/>
<rect x="1175" y="151" width="13" height="12" fill="#f4f6fa"/>
<path d="M1208.5,149 C1209.5,152 1209.5,158 1208.5,161 L1190,155 Z" fill="#f03a14" stroke="#5a2a20" stroke-width=".6" stroke-dasharray="1.2 .8"/>
<path d="M1211.2,152.2 L1216.5,157.5 M1216.5,152.2 L1211.2,157.5" stroke="#fff" stroke-width="1.6"/>
<path d="M1154.5,148.6 C1152.5,151 1152.5,157 1154.5,159.5 L1172,154.3 Z" fill="#f6f6f6" stroke="#444" stroke-width=".6" stroke-dasharray="1.2 .8"/>
<path d="M1175.8,177.4 C1178,178.6 1184.5,178.6 1186.7,177.4 L1181.3,163.7 Z" fill="#f6f6f6" stroke="#444" stroke-width=".6" stroke-dasharray="1.2 .8"/>
<path d="M1212,122.5 V121.5 C1212,119 1216,119 1216,121.5" stroke="#dfe6ee" fill="none" stroke-width="1"/>
<rect x="1210.7" y="122.5" width="6.6" height="4.5" fill="#d6dee8"/>
<path d="M1168.3,196.2 L1159.5,200.5 L1168.3,204.7" stroke="#e2eef0" fill="none" stroke-width="1"/>
<text x="1171.2" y="204.3" font-family="Liberation Sans" font-size="10.5" fill="#ddd6d8" letter-spacing=".9">Persp</text>
</g>
</svg>
<div style="left:305px;top:108px;width:1px;height:519px;background:#3e3e3e"></div>
<div style="left:306px;top:92px;width:1px;height:536px;background:#1d1d1d"></div>
<div style="left:2px;top:627px;width:305px;height:1px;background:#1d1d1d"></div>
<div style="left:309px;top:108px;width:1px;height:520px;background:#1a1a1a"></div>
<div style="left:309px;top:627px;width:920px;height:1px;background:#1a1a1a"></div>
<div style="left:1228px;top:108px;width:1px;height:520px;background:#1a1a1a"></div>
<div style="left:2px;top:631px;width:90px;height:15px;background:linear-gradient(#404040,#393939);border:1px solid #1e1e1e;border-bottom:none;border-radius:4px 4px 0 0"></div>
<svg style="left:8px;top:634px" width="11" height="9" viewBox="0 0 11 9"><path d="M.5 1.5H4L5 2.5H10.5V8.5H.5Z" fill="#8a8a8a" stroke="#111" stroke-width=".8"/></svg>
<span class="t" style="left:22.0px;top:639.79px;font-size:11px;color:#c8c8c8;letter-spacing:0.5px;">Project</span>
<svg style="left:103px;top:633px" width="8" height="11" viewBox="0 0 8 11"><rect x=".5" y=".5" width="7" height="10" fill="#d8d8d8" stroke="#222" stroke-width=".8"/><path d="M2 3H6M2 5H6M2 7H6" stroke="#333" stroke-width=".8"/></svg>
<span class="t" style="left:114.5px;top:639.79px;font-size:11px;color:#c0c0c0;letter-spacing:0.233px;">Console</span>
<svg style="left:1196px;top:636px" width="8" height="10" viewBox="0 0 8 10"><path d="M2 4.5 V2.8 C2 .6 5.6 .6 5.6 2.8" fill="none" stroke="#b8b8b8" stroke-width="1"/><rect x=".5" y="4.5" width="7" height="5" fill="#b0b0b0"/></svg>
<svg style="left:1212px;top:638px" width="14" height="8" viewBox="0 0 14 8"><path d="M0 2.6H4.6L2.3 5.2Z" fill="#cfcfcf"/><rect x="5.6" y="1" width="8" height="1.3" fill="#c4c4c4"/><rect x="5.6" y="3.3" width="8" height="1.3" fill="#c4c4c4"/><rect x="5.6" y="5.6" width="8" height="1.3" fill="#c4c4c4"/></svg>
<div style="left:2px;top:646px;width:1226px;height:17px;background:linear-gradient(#383838,#2d2d2d);border-bottom:1px solid #1d1d1d"></div>
<div style="left:5px;top:647px;width:1px;height:15px;background:#232323"></div>
<div style="left:55px;top:647px;width:1px;height:15px;background:#262626"></div>
<span class="t" style="left:12.5px;top:654.99px;font-size:11px;color:#c4c4c4;letter-spacing:-0.5px;">Create</span>
<svg style="left:49px;top:655px" width="6" height="4" viewBox="0 0 6 4"><path d="M0 0.5H6L3 3.5Z" fill="#b0b0b0"/></svg>
<div style="left:897px;top:648px;width:276px;height:13px;border-radius:7px;background:#3a3a3a;border:1px solid #262626"></div>
<svg style="left:901px;top:649px" width="11" height="11" viewBox="0 0 11 11"><circle cx="4.5" cy="4.5" r="3" fill="none" stroke="#8a8a8a" stroke-width="1.3"/><path d="M6.8 6.8L9.5 9.5" stroke="#8a8a8a" stroke-width="1.6"/></svg>
<div style="left:1182px;top:647px;width:1px;height:15px;background:#232323"></div>
<div style="left:1203px;top:647px;width:1px;height:15px;background:#232323"></div>
<div style="left:1224px;top:647px;width:1px;height:15px;background:#232323"></div>
<svg style="left:1187px;top:648px" width="14" height="12" viewBox="0 0 14 12"><path d="M0.5 10L3.5 4.5L6.5 10Z" fill="#aaa"/><circle cx="8" cy="3.2" r="2.6" fill="#aaa"/><rect x="6.5" y="6.5" width="6" height="5" fill="#aaa"/></svg>
<svg style="left:1206px;top:648px" width="13" height="13" viewBox="0 0 13 13"><path d="M1 1H6L12 7L7 12L1 6Z" fill="#a8a8a8"/><circle cx="3.5" cy="3.5" r="1" fill="#333"/></svg>
<div style="left:2px;top:663px;width:1226px;height:377px;background:#383838"></div>
<svg style="left:5px;top:671px" width="8" height="8" viewBox="0 0 8 8"><path d="M0 1H8L4 8Z" fill="#6e6e6e"/></svg>
<svg style="left:16px;top:668px" width="14" height="12" viewBox="0 0 14 12"><path d="M.5 2.5V1.5H5L6 2.5H13.5V11.5H.5Z" fill="#9aa8ac" stroke="#1a1a1a" stroke-width=".8"/><rect x="1.5" y="3.5" width="11" height="2" fill="#e6ecee"/><rect x="1.5" y="6" width="11" height="5" fill="#8e9ea2"/></svg>
<span class="t" style="left:32.5px;top:674.99px;font-size:11px;color:#c6c6c6;letter-spacing:0.085px;">HoloPlaySDK</span>
<svg style="left:18.5px;top:685px" width="8" height="8" viewBox="0 0 8 8"><path d="M1 0V8L8 4Z" fill="#6e6e6e"/></svg>
<svg style="left:29px;top:683px" width="14" height="12" viewBox="0 0 14 12"><path d="M.5 2.5V1.5H5L6 2.5H13.5V11.5H.5Z" fill="#9aa8ac" stroke="#1a1a1a" stroke-width=".8"/><rect x="1.5" y="3.5" width="11" height="2" fill="#e6ecee"/><rect x="1.5" y="6" width="11" height="5" fill="#8e9ea2"/></svg>
<span class="t" style="left:45.0px;top:689.69px;font-size:11px;color:#c6c6c6;letter-spacing:0.486px;">internal</span>
<svg style="left:29.5px;top:697px" width="13" height="13" viewBox="0 0 13 13"><path d="M0.7,6.2 L11.2,0.5 Q12.9,6.2 11.2,11.9 Z" fill="#f4f4f4" stroke="#050505" stroke-width="1.2" stroke-linejoin="round"/><path d="M2.4,6.2 H7.5 L10.3,1.4 M7.5,6.2 L10.3,11" fill="none" stroke="#050505" stroke-width="1.3"/></svg>
<span class="t" style="left:45.0px;top:704.39px;font-size:11px;color:#c6c6c6;letter-spacing:0.438px;">example scene</span>
<svg style="left:18.5px;top:714px" width="8" height="8" viewBox="0 0 8 8"><path d="M1 0V8L8 4Z" fill="#6e6e6e"/></svg>
<svg style="left:29px;top:712px" width="13" height="13" viewBox="0 0 13 13"><path d="M6.5 .5L12.5 3.5V9.5L6.5 12.5L.5 9.5V3.5Z" fill="#3e9ad8"/><path d="M.5 3.5L6.5 6.5L12.5 3.5L6.5 .5Z" fill="#8fd2f6"/><path d="M6.5 6.5V12.5L12.5 9.5V3.5Z" fill="#2a7ab8"/></svg>
<span class="t" style="left:45.0px;top:719.09px;font-size:11px;color:#c6c6c6;letter-spacing:0.337px;">HoloPlay Capture</span>
<svg style="left:29.5px;top:727px" width="12" height="13" viewBox="0 0 12 13"><path d="M.6 .6H8L11.4 4V12.4H.6Z" fill="#f2f2f2" stroke="#111" stroke-width="1"/><path d="M2.2 6.6H9.6M2.2 8.6H9.6M2.2 10.5H9.6" stroke="#444" stroke-width="1.1"/></svg>
<span class="t" style="left:45.0px;top:733.79px;font-size:11px;color:#c6c6c6;letter-spacing:0.208px;">license</span>
<svg style="left:29.5px;top:742px" width="12" height="13" viewBox="0 0 12 13"><path d="M.6 .6H8L11.4 4V12.4H.6Z" fill="#f2f2f2" stroke="#111" stroke-width="1"/><path d="M2.2 6.6H9.6M2.2 8.6H9.6M2.2 10.5H9.6" stroke="#444" stroke-width="1.1"/></svg>
<span class="t" style="left:45.0px;top:748.49px;font-size:11px;color:#c6c6c6;letter-spacing:0.56px;">quick start</span>
<svg style="left:18.5px;top:758px" width="8" height="8" viewBox="0 0 8 8"><path d="M1 0V8L8 4Z" fill="#6e6e6e"/></svg>
<svg style="left:29px;top:756px" width="13" height="13" viewBox="0 0 13 13"><path d="M6.5 .5L12.5 3.5V9.5L6.5 12.5L.5 9.5V3.5Z" fill="#3e9ad8"/><path d="M.5 3.5L6.5 6.5L12.5 3.5L6.5 .5Z" fill="#8fd2f6"/><path d="M6.5 6.5V12.5L12.5 9.5V3.5Z" fill="#2a7ab8"/></svg>
<span class="t" style="left:45.0px;top:763.19px;font-size:11px;color:#c6c6c6;letter-spacing:0.253px;">Realsense Manager</span>
<div style="left:2px;top:1040px;width:1596px;height:1px;background:#1e1e1e"></div>
<div style="left:2px;top:1041px;width:1596px;height:18px;background:#2a2a2a"></div>
<svg style="left:3px;top:1043px" width="14" height="14" viewBox="0 0 14 14"><path d="M7 1C3.5 1 1 3.3 1 6.3C1 9 3 11 6 11.5L8 13.5L8.5 11.4C11.3 10.8 13 8.8 13 6.3C13 3.3 10.5 1 7 1Z" fill="#fafafa" stroke="#000" stroke-width="1"/><rect x="6.1" y="3" width="1.8" height="5" fill="#444"/><rect x="6.1" y="9" width="1.8" height="1.6" fill="#444"/></svg>
<span class="t" style="left:19.0px;top:1052.19px;font-size:11px;color:#d8d8d8;letter-spacing:0.391px;">HoloPlaySDK Depth: No depth cam found.</span>
<div style="left:1232px;top:76px;width:90px;height:16px;background:linear-gradient(#404040,#393939);border:1px solid #1e1e1e;border-bottom:none;border-radius:4px 4px 0 0"></div>
<svg style="left:1239px;top:78px" width="11" height="11" viewBox="0 0 11 11"><circle cx="5.5" cy="5.5" r="5" fill="#e0e0e0"/><rect x="4.6" y="4.4" width="1.8" height="4.6" fill="#333"/><rect x="4.6" y="2" width="1.8" height="1.6" fill="#333"/></svg>
<span class="t" style="left:1253.6px;top:85.39px;font-size:11px;color:#c8c8c8;letter-spacing:0.581px;">Inspector</span>
<svg style="left:1571px;top:81px" width="8" height="10" viewBox="0 0 8 10"><path d="M2 4.5 V2.8 C2 .6 5.6 .6 5.6 2.8" fill="none" stroke="#b8b8b8" stroke-width="1"/><rect x=".5" y="4.5" width="7" height="5" fill="#b0b0b0"/></svg>
<svg style="left:1583px;top:84px" width="14" height="8" viewBox="0 0 14 8"><path d="M0 2.6H4.6L2.3 5.2Z" fill="#cfcfcf"/><rect x="5.6" y="1" width="8" height="1.3" fill="#c4c4c4"/><rect x="5.6" y="3.3" width="8" height="1.3" fill="#c4c4c4"/><rect x="5.6" y="5.6" width="8" height="1.3" fill="#c4c4c4"/></svg>
<div style="left:1232px;top:92px;width:366px;height:948px;background:#383838"></div>
<div style="left:1597px;top:92px;width:1px;height:948px;background:#2a2a2a"></div>
<svg style="left:1237px;top:98px" width="21" height="21" viewBox="0 0 21 21"><path d="M10.5 1L19.5 5V15L10.5 19.5L1.5 15V5Z" fill="#e85a1a"/><path d="M1.5 5L10.5 9L19.5 5L10.5 1Z" fill="#9ad84a"/><path d="M1.5 5L10.5 9V19.5L1.5 15Z" fill="#3aa0e8"/><path d="M2 17L5.5 17L3.75 19.5Z" fill="#ddd"/></svg>
<div style="left:1271px;top:100px;width:13px;height:13px;background:linear-gradient(#4e4e4e,#3e3e3e);border:1px solid #262626;border-radius:2px"></div>
<svg style="left:1272px;top:100px" width="12" height="12" viewBox="0 0 12 12"><path d="M2 6.5L4.8 9.2L10.5 2.5" stroke="#f2f2f2" stroke-width="1.8" fill="none"/></svg>
<div style="left:1289px;top:98px;width:242px;height:15px;background:#414141;border:1px solid #2c2c2c;border-radius:2px;box-shadow:inset 0 1px 0 #333"></div>
<span class="t" style="left:1291.3px;top:105.79px;font-size:11px;color:#cfcfcf;letter-spacing:-0.112px;">Plane</span>
<div style="left:1535px;top:100px;width:12px;height:12px;background:linear-gradient(#4a4a4a,#3c3c3c);border:1px solid #262626;border-radius:2px"></div>
<span class="t" style="left:1550.3px;top:105.79px;font-size:11px;color:#c8c8c8;letter-spacing:0.52px;">Static</span>
<svg style="left:1584px;top:102px" width="10" height="6" viewBox="0 0 10 6"><path d="M0 0H10L5 6Z" fill="#d6d6d6"/></svg>
<span class="t" style="left:1264.2px;top:123.99px;font-size:11px;color:#bdbdbd;letter-spacing:0.85px;">Tag</span>
<div style="left:1290px;top:118px;width:136px;height:14px;border:1px solid #252525;border-radius:3px;background:linear-gradient(#505050,#3e3e3e)"></div>
<span class="t" style="left:1294.3px;top:123.73px;font-size:10px;color:#c0c0c0;letter-spacing:-0.021px;">Untagged</span>
<svg style="left:1416px;top:120px" width="5" height="9" viewBox="0 0 5 9"><path d="M0 3.5L2.5 0L5 3.5ZM0 5.5H5L2.5 9Z" fill="#bbb"/></svg>
<span class="t" style="left:1432.4px;top:123.99px;font-size:11px;color:#bdbdbd;letter-spacing:0.35px;">Layer</span>
<div style="left:1469px;top:118px;width:125px;height:14px;border:1px solid #252525;border-radius:3px;background:linear-gradient(#505050,#3e3e3e)"></div>
<span class="t" style="left:1474.0px;top:123.73px;font-size:10px;color:#c0c0c0;letter-spacing:0.217px;">Default</span>
<svg style="left:1584px;top:120px" width="5" height="9" viewBox="0 0 5 9"><path d="M0 3.5L2.5 0L5 3.5ZM0 5.5H5L2.5 9Z" fill="#bbb"/></svg>
<div style="left:1232px;top:136px;width:365px;height:1px;background:#262626"></div>
<div style="left:1232px;top:137px;width:365px;height:1px;background:#404040"></div>
<svg style="left:1237px;top:141.8px" width="8" height="8" viewBox="0 0 8 8"><path d="M0 1H8L4 8Z" fill="#7a7a7a"/></svg>
<svg style="left:1247px;top:139px" width="12" height="12" viewBox="0 0 12 12"><path d="M6 7V1" stroke="#7ad03a" stroke-width="1.6"/><path d="M6 7L1.5 11" stroke="#3a80e0" stroke-width="1.6"/><path d="M6 7L10.5 11" stroke="#e03a2a" stroke-width="1.6"/></svg>
<span class="t" style="left:1277.4px;top:145.99px;font-size:11px;color:#d0d0d0;font-weight:bold;letter-spacing:1.0px;">Transform</span>
<svg style="left:1568px;top:139.3px" width="14" height="14" viewBox="0 0 14 14"><path d="M.8 2.5 L2.5 .6 H12.6 V12.2 L10.8 13 H1.6 L.8 12Z" fill="#0e1a34"/><path d="M1.5 2.6L2.8 1.3H12V11.8H2.8L1.5 12.3Z" fill="#4a72b4"/><path d="M3 1.3H12V11.8" fill="none" stroke="#f4f8ff" stroke-width="1.1"/><path d="M2.8 1.6V12" stroke="#a8c4ee" stroke-width=".9"/><text x="4.6" y="9.6" font-family="Liberation Sans" font-size="8.5" font-weight="bold" fill="#f2f6ff">?</text></svg>
<svg style="left:1585px;top:139.3px" width="14" height="14" viewBox="0 0 14 14"><path d="M4.75,0.20 L6.05,2.36 L8.50,1.75 L7.89,4.20 L10.05,5.50 L7.89,6.80 L8.50,9.25 L6.05,8.64 L4.75,10.80 L3.45,8.64 L1.00,9.25 L1.61,6.80 L-0.55,5.50 L1.61,4.20 L1.00,1.75 L3.45,2.36Z" fill="#e6e6e6"/><circle cx="4.75" cy="5.5" r="1.5" fill="#2e2e2e"/><path d="M9.6 7.6H12.2L10.9 10.2Z" fill="#e6e6e6"/></svg>
<div style="left:1241px;top:154px;width:50px;height:15px;background:#4a4a1a"></div>
<span class="t" style="left:1246.2px;top:161.49px;font-size:11px;color:#dede3e;letter-spacing:0.121px;">Position</span>
<div style="left:1384px;top:154px;width:60px;height:15px;background:#414141;border:1px solid #2c2c2c;border-radius:2px"></div>
<div style="left:1460px;top:154px;width:60px;height:15px;background:#414141;border:1px solid #2c2c2c;border-radius:2px"></div>
<div style="left:1535px;top:154px;width:60px;height:15px;background:#414141;border:1px solid #2c2c2c;border-radius:2px"></div>
<div style="left:1373px;top:154px;width:38px;height:15px;background:rgba(98,98,20,.55)"></div>
<div style="left:1448px;top:154px;width:30px;height:15px;background:rgba(98,98,20,.55)"></div>
<div style="left:1524px;top:154px;width:44px;height:15px;background:rgba(98,98,20,.55)"></div>
<span class="t" style="left:1374px;top:161.49px;font-size:11px;color:#dede3e;letter-spacing:0px;">X</span>
<span class="t" style="left:1387px;top:161.49px;font-size:11px;color:#e2e23e;letter-spacing:0px;">0</span>
<span class="t" style="left:1448.5px;top:161.49px;font-size:11px;color:#dede3e;letter-spacing:0px;">Y</span>
<span class="t" style="left:1463px;top:161.49px;font-size:11px;color:#e2e23e;letter-spacing:0.3px;">-3</span>
<span class="t" style="left:1524px;top:161.49px;font-size:11px;color:#7aa030;letter-spacing:0px;">Z</span>
<span class="t" style="left:1538px;top:161.49px;font-size:11px;color:#e2e23e;letter-spacing:0px;">0</span>
<div style="left:1540px;top:154px;width:56px;height:15px;border:1px solid #3a5ae8;border-left:none"></div>
<span class="t" style="left:1246.2px;top:177.79px;font-size:11px;color:#bdbdbd;letter-spacing:0.264px;">Rotation</span>
<div style="left:1384px;top:171px;width:60px;height:13px;background:#414141;border:1px solid #2c2c2c;border-radius:2px"></div>
<span class="t" style="left:1374px;top:177.79px;font-size:11px;color:#bdbdbd;letter-spacing:0px;">X</span>
<span class="t" style="left:1387.5px;top:177.79px;font-size:11px;color:#c8c8c8;letter-spacing:0.3px;">0</span>
<div style="left:1460px;top:171px;width:60px;height:13px;background:#414141;border:1px solid #2c2c2c;border-radius:2px"></div>
<span class="t" style="left:1448px;top:177.79px;font-size:11px;color:#bdbdbd;letter-spacing:0px;">Y</span>
<span class="t" style="left:1463.5px;top:177.79px;font-size:11px;color:#c8c8c8;letter-spacing:0.3px;">0</span>
<div style="left:1535px;top:171px;width:60px;height:13px;background:#414141;border:1px solid #2c2c2c;border-radius:2px"></div>
<span class="t" style="left:1524px;top:177.79px;font-size:11px;color:#bdbdbd;letter-spacing:0px;">Z</span>
<span class="t" style="left:1538.5px;top:177.79px;font-size:11px;color:#c8c8c8;letter-spacing:0.3px;">0</span>
<span class="t" style="left:1246.2px;top:194.59px;font-size:11px;color:#bdbdbd;letter-spacing:0.05px;">Scale</span>
<div style="left:1384px;top:187px;width:60px;height:14px;background:#414141;border:1px solid #2c2c2c;border-radius:2px"></div>
<span class="t" style="left:1374px;top:194.59px;font-size:11px;color:#bdbdbd;letter-spacing:0px;">X</span>
<span class="t" style="left:1387.5px;top:194.59px;font-size:11px;color:#c8c8c8;letter-spacing:0.3px;">1</span>
<div style="left:1460px;top:187px;width:60px;height:14px;background:#414141;border:1px solid #2c2c2c;border-radius:2px"></div>
<span class="t" style="left:1448px;top:194.59px;font-size:11px;color:#bdbdbd;letter-spacing:0px;">Y</span>
<span class="t" style="left:1463.5px;top:194.59px;font-size:11px;color:#c8c8c8;letter-spacing:0.3px;">1</span>
<div style="left:1535px;top:187px;width:60px;height:14px;background:#414141;border:1px solid #2c2c2c;border-radius:2px"></div>
<span class="t" style="left:1524px;top:194.59px;font-size:11px;color:#bdbdbd;letter-spacing:0px;">Z</span>
<span class="t" style="left:1538.5px;top:194.59px;font-size:11px;color:#c8c8c8;letter-spacing:0.3px;">1</span>
<div style="left:1232px;top:205px;width:365px;height:1px;background:#262626"></div>
<div style="left:1232px;top:206px;width:365px;height:1px;background:#404040"></div>
<svg style="left:1237px;top:211.2px" width="8" height="8" viewBox="0 0 8 8"><path d="M0 1H8L4 8Z" fill="#7a7a7a"/></svg>
<svg style="left:1247px;top:208px" width="12" height="13" viewBox="0 0 12 13"><rect x=".5" y=".5" width="11" height="12" rx="2" fill="#a8dcf8"/><path d="M4 .5V12.5M8 .5V12.5M.5 4.5H11.5M.5 8.5H11.5" stroke="#3a8ac8" stroke-width=".9"/></svg>
<span class="t" style="left:1277.4px;top:215.39px;font-size:11px;color:#d0d0d0;font-weight:bold;letter-spacing:0.889px;">Plane (Mesh Filter)</span>
<svg style="left:1568px;top:208.7px" width="14" height="14" viewBox="0 0 14 14"><path d="M.8 2.5 L2.5 .6 H12.6 V12.2 L10.8 13 H1.6 L.8 12Z" fill="#0e1a34"/><path d="M1.5 2.6L2.8 1.3H12V11.8H2.8L1.5 12.3Z" fill="#4a72b4"/><path d="M3 1.3H12V11.8" fill="none" stroke="#f4f8ff" stroke-width="1.1"/><path d="M2.8 1.6V12" stroke="#a8c4ee" stroke-width=".9"/><text x="4.6" y="9.6" font-family="Liberation Sans" font-size="8.5" font-weight="bold" fill="#f2f6ff">?</text></svg>
<svg style="left:1585px;top:208.7px" width="14" height="14" viewBox="0 0 14 14"><path d="M4.75,0.20 L6.05,2.36 L8.50,1.75 L7.89,4.20 L10.05,5.50 L7.89,6.80 L8.50,9.25 L6.05,8.64 L4.75,10.80 L3.45,8.64 L1.00,9.25 L1.61,6.80 L-0.55,5.50 L1.61,4.20 L1.00,1.75 L3.45,2.36Z" fill="#e6e6e6"/><circle cx="4.75" cy="5.5" r="1.5" fill="#2e2e2e"/><path d="M9.6 7.6H12.2L10.9 10.2Z" fill="#e6e6e6"/></svg>
<span class="t" style="left:1246.2px;top:229.99px;font-size:11px;color:#bdbdbd;letter-spacing:-0.1px;">Mesh</span>
<div style="left:1374px;top:224px;width:204px;height:13px;background:#424242;border:1px solid #2a2a2a;border-radius:2px;box-shadow:inset 0 1px 0 #2e2e2e"></div>
<svg style="left:1377px;top:226px" width="9" height="10" viewBox="0 0 9 10"><rect x="0" y="0" width="9" height="10" fill="#9ab0c8"/><path d="M2.5 0V10M5 0V10M7.5 0V10" stroke="#556" stroke-width=".7"/></svg>
<span class="t" style="left:1388.4px;top:229.99px;font-size:11px;color:#c8c8c8;letter-spacing:-0.088px;">Plane</span>
<svg style="left:1584px;top:226px" width="10" height="10" viewBox="0 0 10 10"><circle cx="5" cy="5" r="3.8" fill="none" stroke="#c8c8c8" stroke-width="1.2"/><circle cx="5" cy="5" r="1.3" fill="#c8c8c8"/></svg>
<div style="left:1232px;top:241px;width:365px;height:1px;background:#262626"></div>
<div style="left:1232px;top:242px;width:365px;height:1px;background:#404040"></div>
<svg style="left:1237px;top:246.7px" width="8" height="8" viewBox="0 0 8 8"><path d="M0 1H8L4 8Z" fill="#7a7a7a"/></svg>
<svg style="left:1247px;top:244px" width="12" height="13" viewBox="0 0 12 13"><rect x=".5" y=".5" width="11" height="12" rx="2" fill="#c8e830"/><path d="M4 .5V12.5M8 .5V12.5M.5 4.5H11.5M.5 8.5H11.5" stroke="#5a8a10" stroke-width=".9"/></svg>
<div style="left:1264px;top:245.7px;width:12px;height:11.0px;background:linear-gradient(#4e4e4e,#3e3e3e);border:1px solid #262626;border-radius:2px"></div>
<svg style="left:1264px;top:244.7px" width="12" height="12" viewBox="0 0 12 12"><path d="M2 6.5L4.8 9.2L10.5 2.5" stroke="#f2f2f2" stroke-width="1.8" fill="none"/></svg>
<span class="t" style="left:1277.4px;top:250.89px;font-size:11px;color:#d0d0d0;font-weight:bold;letter-spacing:0.679px;">Mesh Collider</span>
<svg style="left:1568px;top:244.2px" width="14" height="14" viewBox="0 0 14 14"><path d="M.8 2.5 L2.5 .6 H12.6 V12.2 L10.8 13 H1.6 L.8 12Z" fill="#0e1a34"/><path d="M1.5 2.6L2.8 1.3H12V11.8H2.8L1.5 12.3Z" fill="#4a72b4"/><path d="M3 1.3H12V11.8" fill="none" stroke="#f4f8ff" stroke-width="1.1"/><path d="M2.8 1.6V12" stroke="#a8c4ee" stroke-width=".9"/><text x="4.6" y="9.6" font-family="Liberation Sans" font-size="8.5" font-weight="bold" fill="#f2f6ff">?</text></svg>
<svg style="left:1585px;top:244.2px" width="14" height="14" viewBox="0 0 14 14"><path d="M4.75,0.20 L6.05,2.36 L8.50,1.75 L7.89,4.20 L10.05,5.50 L7.89,6.80 L8.50,9.25 L6.05,8.64 L4.75,10.80 L3.45,8.64 L1.00,9.25 L1.61,6.80 L-0.55,5.50 L1.61,4.20 L1.00,1.75 L3.45,2.36Z" fill="#e6e6e6"/><circle cx="4.75" cy="5.5" r="1.5" fill="#2e2e2e"/><path d="M9.6 7.6H12.2L10.9 10.2Z" fill="#e6e6e6"/></svg>
<span class="t" style="left:1246.2px;top:265.89px;font-size:11px;color:#bdbdbd;letter-spacing:0.5px;">Convex</span>
<div style="left:1374px;top:261px;width:12px;height:11px;background:linear-gradient(#4a4a4a,#3c3c3c);border:1px solid #262626;border-radius:2px"></div>
<span class="t" style="left:1260.0px;top:282.49px;font-size:11px;color:#7c7c7c;letter-spacing:0.345px;">Inflate Mesh</span>
<div style="left:1374px;top:278px;width:12px;height:11px;background:linear-gradient(#4a4a4a,#3c3c3c);border:1px solid #262626;border-radius:2px"></div>
<span class="t" style="left:1274.0px;top:298.99px;font-size:11px;color:#7c7c7c;letter-spacing:0.317px;">Skin Width</span>
<div style="left:1374px;top:293px;width:220px;height:13px;background:#3c3c3c;border:1px solid #333;border-radius:2px"></div>
<span class="t" style="left:1376.2px;top:299.39px;font-size:11px;color:#7c7c7c;letter-spacing:0.267px;">0.01</span>
<span class="t" style="left:1260.0px;top:315.59px;font-size:11px;color:#7c7c7c;letter-spacing:0.617px;">Is Trigger</span>
<div style="left:1374px;top:311px;width:12px;height:11px;background:linear-gradient(#4a4a4a,#3c3c3c);border:1px solid #262626;border-radius:2px"></div>
<span class="t" style="left:1246.2px;top:331.99px;font-size:11px;color:#bdbdbd;letter-spacing:0.3px;">Material</span>
<div style="left:1374px;top:325px;width:204px;height:14px;background:#424242;border:1px solid #2a2a2a;border-radius:2px;box-shadow:inset 0 1px 0 #2e2e2e"></div>
<span class="t" style="left:1376.2px;top:331.99px;font-size:11px;color:#c8c8c8;letter-spacing:0.293px;">None (Physic Material)</span>
<svg style="left:1584px;top:327px" width="10" height="10" viewBox="0 0 10 10"><circle cx="5" cy="5" r="3.8" fill="none" stroke="#c8c8c8" stroke-width="1.2"/><circle cx="5" cy="5" r="1.3" fill="#c8c8c8"/></svg>
<span class="t" style="left:1246.2px;top:348.69px;font-size:11px;color:#bdbdbd;letter-spacing:-0.1px;">Mesh</span>
<div style="left:1374px;top:342px;width:204px;height:14px;background:#424242;border:1px solid #2a2a2a;border-radius:2px;box-shadow:inset 0 1px 0 #2e2e2e"></div>
<svg style="left:1377px;top:344px" width="9" height="10" viewBox="0 0 9 10"><rect x="0" y="0" width="9" height="10" fill="#9ab0c8"/><path d="M2.5 0V10M5 0V10M7.5 0V10" stroke="#556" stroke-width=".7"/></svg>
<span class="t" style="left:1388.4px;top:348.69px;font-size:11px;color:#c8c8c8;letter-spacing:-0.088px;">Plane</span>
<svg style="left:1584px;top:344px" width="10" height="10" viewBox="0 0 10 10"><circle cx="5" cy="5" r="3.8" fill="none" stroke="#c8c8c8" stroke-width="1.2"/><circle cx="5" cy="5" r="1.3" fill="#c8c8c8"/></svg>
<div style="left:1232px;top:361px;width:365px;height:1px;background:#262626"></div>
<div style="left:1232px;top:362px;width:365px;height:1px;background:#404040"></div>
<svg style="left:1237px;top:365.8px" width="8" height="8" viewBox="0 0 8 8"><path d="M0 1H8L4 8Z" fill="#7a7a7a"/></svg>
<svg style="left:1247px;top:363px" width="13" height="14" viewBox="0 0 13 14"><rect x=".5" y=".5" width="11" height="12" rx="2" fill="#a8dcf8"/><path d="M4 .5V12.5M8 .5V12.5M.5 4.5H11.5M.5 8.5H11.5" stroke="#3a8ac8" stroke-width=".9"/><ellipse cx="9" cy="11" rx="3.5" ry="2.3" fill="#fff"/><circle cx="9" cy="11" r="1.2" fill="#2a5a90"/></svg>
<div style="left:1264px;top:364.8px;width:12px;height:11.0px;background:linear-gradient(#4e4e4e,#3e3e3e);border:1px solid #262626;border-radius:2px"></div>
<svg style="left:1264px;top:363.8px" width="12" height="12" viewBox="0 0 12 12"><path d="M2 6.5L4.8 9.2L10.5 2.5" stroke="#f2f2f2" stroke-width="1.8" fill="none"/></svg>
<span class="t" style="left:1277.4px;top:369.99px;font-size:11px;color:#d0d0d0;font-weight:bold;letter-spacing:0.837px;">Mesh Renderer</span>
<svg style="left:1568px;top:363.3px" width="14" height="14" viewBox="0 0 14 14"><path d="M.8 2.5 L2.5 .6 H12.6 V12.2 L10.8 13 H1.6 L.8 12Z" fill="#0e1a34"/><path d="M1.5 2.6L2.8 1.3H12V11.8H2.8L1.5 12.3Z" fill="#4a72b4"/><path d="M3 1.3H12V11.8" fill="none" stroke="#f4f8ff" stroke-width="1.1"/><path d="M2.8 1.6V12" stroke="#a8c4ee" stroke-width=".9"/><text x="4.6" y="9.6" font-family="Liberation Sans" font-size="8.5" font-weight="bold" fill="#f2f6ff">?</text></svg>
<svg style="left:1585px;top:363.3px" width="14" height="14" viewBox="0 0 14 14"><path d="M4.75,0.20 L6.05,2.36 L8.50,1.75 L7.89,4.20 L10.05,5.50 L7.89,6.80 L8.50,9.25 L6.05,8.64 L4.75,10.80 L3.45,8.64 L1.00,9.25 L1.61,6.80 L-0.55,5.50 L1.61,4.20 L1.00,1.75 L3.45,2.36Z" fill="#e6e6e6"/><circle cx="4.75" cy="5.5" r="1.5" fill="#2e2e2e"/><path d="M9.6 7.6H12.2L10.9 10.2Z" fill="#e6e6e6"/></svg>
<svg style="left:1236px;top:381px" width="8" height="8" viewBox="0 0 8 8"><path d="M1 0V8L8 4Z" fill="#6e6e6e"/></svg>
<span class="t" style="left:1246.2px;top:384.99px;font-size:11px;color:#bdbdbd;letter-spacing:0.207px;">Lighting</span>
<svg style="left:1236px;top:397px" width="8" height="8" viewBox="0 0 8 8"><path d="M1 0V8L8 4Z" fill="#6e6e6e"/></svg>
<span class="t" style="left:1246.2px;top:401.39px;font-size:11px;color:#bdbdbd;letter-spacing:0.2px;">Materials</span>
<div style="left:1232px;top:416px;width:365px;height:1px;background:#262626"></div>
<div style="left:1232px;top:417px;width:365px;height:1px;background:#404040"></div>
<svg style="left:1246px;top:422px" width="29" height="30" viewBox="0 0 29 30"><defs><radialGradient id="sph" cx="0.38" cy="0.32" r="0.7"><stop offset="0" stop-color="#ffffff"/><stop offset="0.55" stop-color="#e4e8f0"/><stop offset="1" stop-color="#8a94a8"/></radialGradient></defs><rect width="29" height="30" fill="#000"/><circle cx="14.5" cy="15" r="13" fill="url(#sph)"/></svg>
<svg style="left:1236px;top:445px" width="8" height="8" viewBox="0 0 8 8"><path d="M1 0V8L8 4Z" fill="#6e6e6e"/></svg>
<span class="t" style="left:1283.2px;top:428.84px;font-size:12px;color:#c8c8c8;letter-spacing:0.44px;">Default-Material</span>
<span class="t" style="left:1283.2px;top:447.49px;font-size:11px;color:#8a8a8a;letter-spacing:0.31px;">Shader</span>
<div style="left:1328px;top:441px;width:265px;height:13px;border:1px solid #2e2e2e;border-radius:3px;background:linear-gradient(#444,#3a3a3a)"></div>
<span class="t" style="left:1333.4px;top:447.04px;font-size:10px;color:#8a8a8a;letter-spacing:-0.086px;">Standard</span>
<svg style="left:1585px;top:446px" width="6" height="4" viewBox="0 0 6 4"><path d="M0 0.5H6L3 3.5Z" fill="#888"/></svg>
<svg style="left:1568px;top:422.5px" width="14" height="14" viewBox="0 0 14 14"><path d="M.8 2.5 L2.5 .6 H12.6 V12.2 L10.8 13 H1.6 L.8 12Z" fill="#0e1a34"/><path d="M1.5 2.6L2.8 1.3H12V11.8H2.8L1.5 12.3Z" fill="#4a72b4"/><path d="M3 1.3H12V11.8" fill="none" stroke="#f4f8ff" stroke-width="1.1"/><path d="M2.8 1.6V12" stroke="#a8c4ee" stroke-width=".9"/><text x="4.6" y="9.6" font-family="Liberation Sans" font-size="8.5" font-weight="bold" fill="#f2f6ff">?</text></svg>
<svg style="left:1585px;top:422.5px" width="14" height="14" viewBox="0 0 14 14"><path d="M4.75,0.20 L6.05,2.36 L8.50,1.75 L7.89,4.20 L10.05,5.50 L7.89,6.80 L8.50,9.25 L6.05,8.64 L4.75,10.80 L3.45,8.64 L1.00,9.25 L1.61,6.80 L-0.55,5.50 L1.61,4.20 L1.00,1.75 L3.45,2.36Z" fill="#e6e6e6"/><circle cx="4.75" cy="5.5" r="1.5" fill="#2e2e2e"/><path d="M9.6 7.6H12.2L10.9 10.2Z" fill="#e6e6e6"/></svg>
<div style="left:1232px;top:456px;width:365px;height:1px;background:#262626"></div>
<div style="left:1232px;top:457px;width:365px;height:1px;background:#404040"></div>
<div style="left:1232px;top:462px;width:365px;height:1px;background:#252525"></div>
<div style="left:1308px;top:473px;width:210px;height:20px;border:1px solid #1e1e1e;border-radius:3px;background:linear-gradient(#555,#404040);box-shadow:inset 0 1px 0 rgba(255,255,255,.1)"></div>
<span class="t" style="left:1366.4px;top:481.97px;font-size:12.5px;color:#d0d0d0;letter-spacing:0.279px;">Add Component</span>
</body></html>
